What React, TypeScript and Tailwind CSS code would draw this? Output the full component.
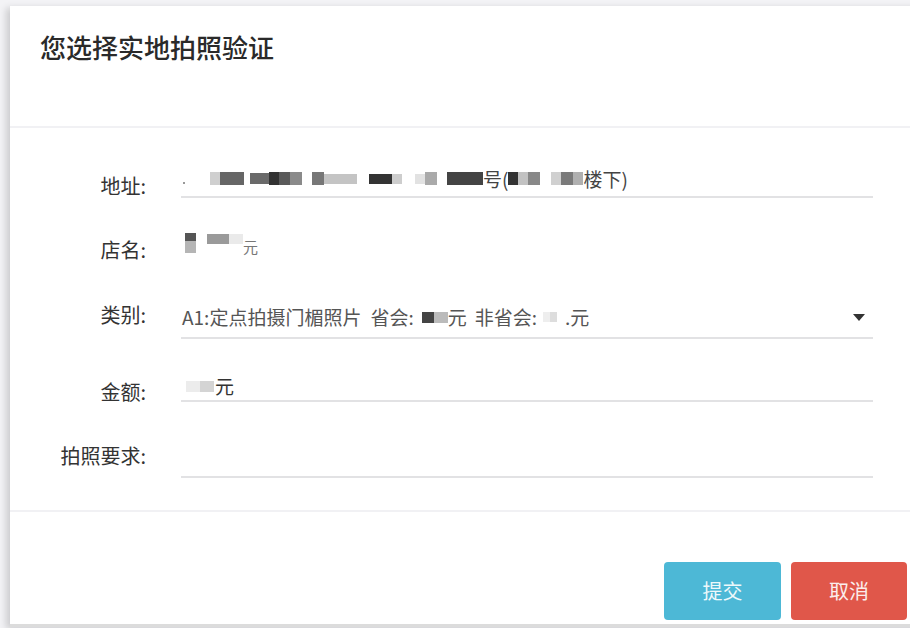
import React from "react";

const B = ({ w, c, h = "h-[13px]" }: { w: string; c: string; h?: string }) => (
  <span className={`inline-block ${w} ${h} ${c} blur-[0.6px]`} />
);

const Label = ({ children, pt }: { children: React.ReactNode; pt: string }) => (
  <div className={`w-[136px] shrink-0 text-right ${pt}`}>
    <div className="h-[22px] leading-[22px] text-[20px] text-[#333] whitespace-nowrap">{children}</div>
  </div>
);

export default function App() {
  return (
    <div className="h-[628px] w-[910px] overflow-hidden bg-[#f3f3f6] pl-[10px] pt-[6px] font-['Noto_Sans_CJK_SC','Noto_Sans',sans-serif]">
      <div className="h-[618px] w-[915px] bg-white shadow-[-4px_2px_7px_rgba(0,0,0,0.16)] border-b-[3px] border-[#dcdcdc] box-content">
        {/* header */}
        <div className="h-[122px] border-b-2 border-[#f1f1f4] pl-[30px] pt-[26px]">
          <h1 className="text-[26px] leading-[30px] font-medium text-[#2a2a2a]">
            您选择实地拍照验证
          </h1>
        </div>

        {/* body */}
        <div className="pt-[34px] pb-[32px] border-b-2 border-[#f1f1f4] text-[19px] text-[#333]">
          {/* 地址 */}
          <div className="flex h-[36px]">
            <Label pt="pt-[13px]">地址:</Label>
            <div className="ml-[35px] w-[692px] h-[36px] border-b-2 border-[#e2e2e4] flex items-center text-[19px] text-[#444] pb-[1px]">
              <span className="inline-block w-[2px] h-[2px] bg-[#999] ml-[2px] mt-[8px]" />
              <span className="ml-[25px]" />
              <B w="w-[10px]" c="bg-[#cfcfcf]" />
              <B w="w-[24px]" c="bg-[#666]" />
              <span className="ml-[6px]" />
              <B w="w-[19px]" c="bg-[#6a6a6a]" h="h-[11px]" />
              <B w="w-[10px]" c="bg-[#333]" />
              <B w="w-[11px]" c="bg-[#5a5a5a]" />
              <B w="w-[12px]" c="bg-[#8a8a8a]" />
              <span className="ml-[10px]" />
              <B w="w-[12px]" c="bg-[#777]" />
              <B w="w-[33px]" c="bg-[#c4c4c4]" h="h-[10px]" />
              <span className="ml-[12px]" />
              <B w="w-[23px]" c="bg-[#333]" h="h-[10px]" />
              <B w="w-[10px]" c="bg-[#cdcdcd]" h="h-[10px]" />
              <span className="ml-[13px]" />
              <B w="w-[10px]" c="bg-[#e2e2e2]" h="h-[10px]" />
              <B w="w-[12px]" c="bg-[#aaa]" />
              <span className="ml-[10px]" />
              <B w="w-[36px]" c="bg-[#444]" />
              <span className="leading-none">号(</span>
              <B w="w-[10px]" c="bg-[#333]" />
              <B w="w-[10px]" c="bg-[#c2c2c2]" />
              <B w="w-[12px]" c="bg-[#888]" />
              <span className="ml-[11px]" />
              <B w="w-[10px]" c="bg-[#d0d0d0]" />
              <B w="w-[12px]" c="bg-[#7a7a7a]" />
              <B w="w-[10px]" c="bg-[#b0b0b0]" />
              <span className="leading-none">楼下)</span>
            </div>
          </div>

          {/* 店名 */}
          <div className="flex h-[31px] mt-[32px]">
            <Label pt="pt-[9px]">店名:</Label>
            <div className="ml-[39px] w-[688px] h-[26px] flex items-center">
              <span className="inline-flex flex-col blur-[0.6px]">
                <span className="w-[11px] h-[8px] bg-[#555]" />
                <span className="w-[11px] h-[12px] bg-[#b5b5b5]" />
              </span>
              <span className="ml-[11px] w-[22px] h-[10px] bg-[#9a9a9a] blur-[0.6px] -mt-[8px]" />
              <span className="w-[14px] h-[10px] bg-[#eaeaea] blur-[0.6px] -mt-[8px]" />
              <span className="text-[15px] text-[#777] leading-none mt-[6px]">元</span>
            </div>
          </div>

          {/* 类别 */}
          <div className="flex h-[42px] mt-[36px]">
            <Label pt="pt-[7px]">类别:</Label>
            <div className="ml-[35px] w-[692px] h-[42px] border-b-2 border-[#e2e2e4] flex items-center text-[19px] text-[#555] whitespace-nowrap">
              <span className="ml-[1px]">A1:定点拍摄门楣照片</span>
              <span className="ml-[9px]">省会:</span>
              <span className="ml-[8px]" />
              <B w="w-[12px]" c="bg-[#444]" h="h-[11px]" />
              <B w="w-[14px]" c="bg-[#bbb]" h="h-[11px]" />
              <span>元</span>
              <span className="ml-[8px]">非省会:</span>
              <span className="ml-[6px]" />
              <B w="w-[7px]" c="bg-[#eee]" h="h-[10px]" />
              <B w="w-[7px]" c="bg-[#ddd]" h="h-[10px]" />
              <span className="ml-[8px]">.元</span>
              <span className="ml-auto mr-[8px] w-0 h-0 border-l-[6px] border-r-[6px] border-t-[7px] border-l-transparent border-r-transparent border-t-[#333]" />
            </div>
          </div>

          {/* 金额 */}
          <div className="flex h-[33px] mt-[31px]">
            <Label pt="pt-[11px]">金额:</Label>
            <div className="ml-[35px] w-[692px] h-[32px] border-b-2 border-[#e2e2e4] flex items-center pt-[2px] text-[19px] text-[#333]">
              <span className="ml-[5px]" />
              <B w="w-[14px]" c="bg-[#ececec]" h="h-[11px]" />
              <B w="w-[14px]" c="bg-[#d4d4d4]" h="h-[11px]" />
              <span className="ml-[1px]">元</span>
            </div>
          </div>

          {/* 拍照要求 */}
          <div className="flex h-[38px] mt-[37px]">
            <Label pt="pt-[5px]">拍照要求:</Label>
            <div className="ml-[35px] w-[692px] h-[38px] border-b-2 border-[#e2e2e4]" />
          </div>
        </div>

        {/* footer */}
        <div className="flex justify-end gap-[10px] pt-[50px] pr-[18px]">
          <button className="w-[117px] h-[58px] rounded-[4px] bg-[#4db8d6] text-[#eef8fb] text-[20px]">
            提交
          </button>
          <button className="w-[116px] h-[58px] rounded-[4px] bg-[#e0574a] text-[#fbeeed] text-[20px]">
            取消
          </button>
        </div>
      </div>
    </div>
  );
}
